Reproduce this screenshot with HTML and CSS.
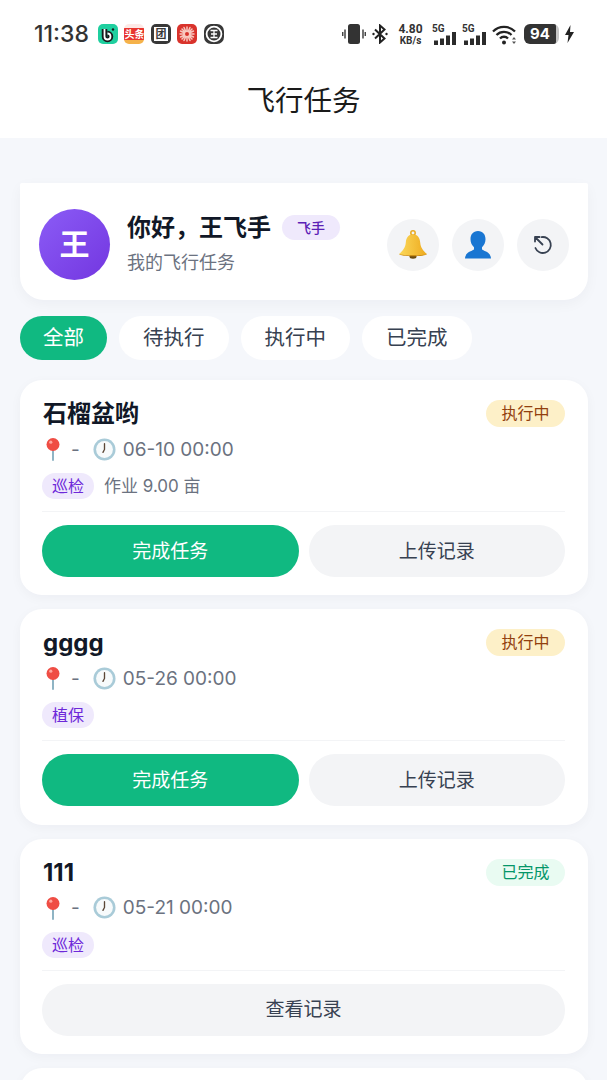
FILE: index.html
```html
<!DOCTYPE html>
<html lang="zh">
<head>
    <meta charset="UTF-8">
    <meta name="viewport" content="width=device-width, initial-scale=1.0">
    <title>飞行任务</title>
    <link rel="stylesheet" href="styles.css">
</head>
<body>
    <svg class="defs" width="0" height="0">
        <symbol id="pin" viewBox="0 0 18 24">
            <path d="M9 11v12" stroke="#8fb4c4" stroke-width="2" stroke-linecap="round"/>
            <circle cx="9" cy="7.5" r="6.5" fill="#ef4d44"/>
            <circle cx="6.800" cy="5.200" r="1.600" fill="#ffa69e"/>
        </symbol>
        <symbol id="clock" viewBox="0 0 24 24">
            <circle cx="12" cy="12" r="11.500" fill="#a9cbd8"/>
            <circle cx="12" cy="12" r="8.800" fill="#f7fafb"/>
            <path d="M12 12V6M12 12l-1.600 3" stroke="#5b4636" stroke-width="1.400" stroke-linecap="round"/>
        </symbol>
    </svg>

    <div class="top-bar">
        <div class="status-bar">
            <span class="time">11:38</span>
            <div class="app-icons">
                <span class="app app-green">
                    <svg width="17" height="17" viewBox="0 0 17 17"><path d="M5.500 3v7.500a3 3 0 1 0 3-3" fill="none" stroke="#17191b" stroke-width="5.500"/><path d="M5.500 3v7.500a3 3 0 1 0 3-3" fill="none" stroke="#fff" stroke-width="1.800"/><circle cx="14" cy="3.500" r="1.200" fill="#17191b"/></svg>
                </span>
                <span class="app app-news">头条</span>
                <span class="app app-dark"><span class="app-frame">团</span></span>
                <span class="app app-red">
                    <svg width="18" height="18" viewBox="0 0 18 18"><g stroke="#f8c9c0" stroke-width="1.500" stroke-linecap="round"><path d="M9 2v14M2 9h14M4 4l10 10M14 4L4 14M6 2.500l6 13M12 2.500l-6 13M2.500 6l13 6M2.500 12l13-6"/></g><circle cx="9" cy="9" r="2" fill="#d9332c"/></svg>
                </span>
                <span class="app app-dark app-round">
                    <svg width="18" height="18" viewBox="0 0 18 18"><circle cx="9" cy="9" r="7.400" fill="none" stroke="#fff" stroke-width="1.800"/><path d="M5.500 5.500h7M6 9h6M5.500 12.500h7M9 5.500v7" stroke="#fff" stroke-width="1.300"/></svg>
                </span>
            </div>
            <div class="sys-icons">
                <svg class="ic-vibrate" width="24" height="20" viewBox="0 0 24 20"><rect x="6" y="0" width="12" height="20" rx="2.500" fill="#333"/><path d="M3 5.500v9M.7 8v4M21 5.500v9M23.300 8v4" stroke="#444" stroke-width="1.500"/></svg>
                <svg class="ic-bt" width="16" height="20" viewBox="0 0 16 20"><path d="M3 5.500l9.500 9L8 18.500V1.500l4.500 4L3 14.500" fill="none" stroke="#222" stroke-width="2"/><circle cx="1.500" cy="10" r="1.200" fill="#222"/><circle cx="14.500" cy="10" r="1.200" fill="#222"/></svg>
                <span class="speed"><b>4.80</b><b class="unit">KB/s</b></span>
                <span class="signal"><b>5G</b><svg width="24" height="13" viewBox="0 0 24 13"><path d="M2 8.500h4V13H2zM8 6.500h4V13H8zM14 3.500h4V13h-4zM20 0h4v13h-4z" fill="#2b2b2b"/></svg></span>
                <span class="signal"><b>5G</b><svg width="24" height="13" viewBox="0 0 24 13"><path d="M2 8.500h4V13H2zM8 6.500h4V13H8zM14 3.500h4V13h-4zM20 0h4v13h-4z" fill="#2b2b2b"/></svg></span>
                <svg width="26" height="21" viewBox="0 0 26 21"><path d="M1 7.500a15.500 15.500 0 0 1 22 0M4.500 11a10.500 10.500 0 0 1 15 0M8 14.500a5.500 5.500 0 0 1 8 0" fill="none" stroke="#222" stroke-width="2.300"/><circle cx="12" cy="18.500" r="2" fill="#222"/><path d="M22 13l2 2.500h-4zM22 20l2-2.500h-4z" fill="#555"/></svg>
                <span class="battery"><span class="battery-level">94</span></span>
                <svg width="9" height="18" viewBox="0 0 9 18"><path d="M5.500 0L0 10h3.500L2.500 18 9 7H5z" fill="#222"/></svg>
            </div>
        </div>
        <h1>飞行任务</h1>
    </div>

    <main class="content">
        <section class="hero">
            <div class="avatar">王</div>
            <div class="hero-text">
                <div class="hero-name">
                    <strong>你好，王飞手</strong>
                    <span class="role">飞手</span>
                </div>
                <p>我的飞行任务</p>
            </div>
            <div class="hero-actions">
                <button class="round-btn" aria-label="通知">
                    <svg width="30" height="30" viewBox="0 0 30 30">
                        <defs><linearGradient id="bell" x1="0" x2="1" y1="0" y2="0"><stop offset="0" stop-color="#fbd85a"/><stop offset="1" stop-color="#eeaa1e"/></linearGradient></defs>
                        <circle cx="15" cy="3" r="2.200" fill="none" stroke="#e8a91f" stroke-width="1.500"/>
                        <ellipse cx="15" cy="26.500" rx="3.500" ry="2.200" fill="#6b4a10"/>
                        <path d="M15 4.500c-4.800 0-6.800 3.300-7.200 8-.4 4.500-2.300 7.800-6.800 11.500 2 2 26 2 28 0-4.500-3.700-6.400-7-6.800-11.500-.4-4.700-2.400-8-7.200-8z" fill="url(#bell)"/>
                        <path d="M1 24c3.500 1.700 24.500 1.700 28 0-1 3-27 3-28 0z" fill="#cf8e12"/>
                    </svg>
                </button>
                <button class="round-btn" aria-label="个人">
                    <svg width="28" height="30" viewBox="0 0 28 30"><path d="M14 1c-5 0-7.500 3.600-7.500 8.300 0 3.300 1.300 6.100 3.500 7.900v2.300C7 21.500 1.500 22 1 28.500h26c-.5-6.500-6-7-9-9v-2.300c2.200-1.800 3.500-4.600 3.500-7.900C21.500 4.600 19 1 14 1z" fill="#1976d2"/></svg>
                </button>
                <button class="round-btn" aria-label="历史">
                    <svg width="22" height="22" viewBox="0 0 22 22" fill="none" stroke="#374151" stroke-width="1.800" stroke-linecap="round" stroke-linejoin="round"><path d="M9.500 3.100A8 8 0 1 1 3.400 14"/><path d="M3 3l7.500 7.500M3 3v4.500M3 3h4.500"/></svg>
                </button>
            </div>
        </section>

        <nav class="tabs">
            <span class="tab tab-on">全部</span>
            <span class="tab">待执行</span>
            <span class="tab">执行中</span>
            <span class="tab">已完成</span>
        </nav>

        <article class="task">
            <div class="task-head">
                <h2>石榴盆哟</h2>
                <span class="status status-run">执行中</span>
            </div>
            <div class="meta">
                <svg class="pin"><use href="#pin"/></svg>
                <span>-</span>
                <svg class="clock"><use href="#clock"/></svg>
                <span>06-10 00:00</span>
            </div>
            <div class="tags">
                <span class="tag">巡检</span>
                <span class="area">作业 9.00 亩</span>
            </div>
            <div class="task-btns">
                <button class="btn btn-main">完成任务</button>
                <button class="btn">上传记录</button>
            </div>
        </article>

        <article class="task">
            <div class="task-head">
                <h2>gggg</h2>
                <span class="status status-run">执行中</span>
            </div>
            <div class="meta">
                <svg class="pin"><use href="#pin"/></svg>
                <span>-</span>
                <svg class="clock"><use href="#clock"/></svg>
                <span>05-26 00:00</span>
            </div>
            <div class="tags">
                <span class="tag">植保</span>
            </div>
            <div class="task-btns">
                <button class="btn btn-main">完成任务</button>
                <button class="btn">上传记录</button>
            </div>
        </article>

        <article class="task">
            <div class="task-head">
                <h2>111</h2>
                <span class="status status-done">已完成</span>
            </div>
            <div class="meta">
                <svg class="pin"><use href="#pin"/></svg>
                <span>-</span>
                <svg class="clock"><use href="#clock"/></svg>
                <span>05-21 00:00</span>
            </div>
            <div class="tags">
                <span class="tag">巡检</span>
            </div>
            <div class="task-btns">
                <button class="btn">查看记录</button>
            </div>
        </article>

        <article class="task"></article>
    </main>
</body>
</html>
```

FILE: styles.css
```css
html, body {
    height: 1080px;
    overflow: hidden;
}
body {
    margin: 0;
    background-color: #f5f7fb;
    color: #111827;
    font-family: 'Inter', 'Noto Sans CJK SC', sans-serif;
}
.defs {
    position: absolute;
}
.top-bar {
    height: 138px;
    background-color: #fff;
}
.status-bar {
    display: flex;
    align-items: center;
    height: 66px;
    padding: 2px 33px 0 34px;
    box-sizing: border-box;
}
.time {
    font-size: 23px;
    font-weight: 500;
    color: #333;
    margin-right: 9px;
}
.app-icons {
    display: flex;
    gap: 6.5px;
}
.app {
    width: 20px;
    height: 20px;
    border-radius: 5px;
    display: flex;
    align-items: center;
    justify-content: center;
    font-size: 11px;
    font-weight: 700;
    line-height: 1;
    overflow: hidden;
}
.app-green {
    background-color: #1fcf9f;
}
.app-news {
    background: linear-gradient(#fde9e6 0, #fde9e6 22%, #e8352f 22%, #e8352f 80%, #f5b24a 80%);
    color: #fff;
    font-size: 10px;
}
.app-dark {
    background-color: #383838;
    color: #383838;
    font-size: 11px;
}
.app-frame {
    width: 14px;
    height: 14px;
    background-color: #fff;
    line-height: 14px;
    text-align: center;
}
.app-round {
    border-radius: 7px;
}
.app-red {
    background-color: #d9332c;
}
.sys-icons {
    display: flex;
    align-items: center;
    gap: 6px;
    margin-left: auto;
}
.ic-bt {
    margin-right: 3px;
}
.speed {
    display: flex;
    flex-direction: column;
    align-items: center;
    min-width: 27px;
    color: #333;
    line-height: 12px;
    font-size: 12px;
    font-family: 'Roboto', sans-serif;
    margin-right: 2px;
}
.speed .unit {
    font-size: 10px;
    line-height: 11px;
}
.signal {
    display: flex;
    flex-direction: column;
    align-items: flex-start;
    font-size: 10px;
    line-height: 10px;
    color: #333;
    font-family: 'Roboto', sans-serif;
}
.signal svg {
    margin-top: -2px;
}
.battery {
    display: flex;
    align-items: center;
    width: 35px;
    height: 20px;
    box-sizing: border-box;
    border-right: 3px solid #c4c4c4;
    border-radius: 6px;
}
.battery-level {
    flex: 1;
    height: 20px;
    background-color: #333;
    border-radius: 6px 2px 2px 6px;
    color: #fff;
    font-size: 15px;
    font-weight: 700;
    line-height: 20px;
    text-align: center;
}
h1 {
    margin: 0;
    font-size: 28.5px;
    font-weight: 400;
    line-height: 70px;
    text-align: center;
    color: #1a1a1a;
}
.content {
    padding: 45px 19px 0 20px;
}
.hero {
    display: flex;
    align-items: center;
    height: 117px;
    padding: 6px 19px 0;
    box-sizing: border-box;
    background-color: #fff;
    border-radius: 2px 2px 24px 24px;
    box-shadow: 0 4px 14px rgba(17, 24, 39, 0.04);
}
.avatar {
    flex: none;
    width: 71px;
    height: 71px;
    border-radius: 50%;
    background: linear-gradient(135deg, #8b5cf6, #7336e0);
    color: #fff;
    font-size: 30px;
    font-weight: 700;
    line-height: 71px;
    text-align: center;
}
.hero-text {
    margin-left: 17px;
    padding-bottom: 4px;
}
.hero-name {
    display: flex;
    align-items: center;
    gap: 11px;
}
.hero-name strong {
    font-size: 24px;
    line-height: 36px;
    font-weight: 700;
}
.role {
    width: 58px;
    height: 25px;
    border-radius: 13px;
    background-color: #efe9fc;
    color: #5b21b6;
    font-size: 14px;
    font-weight: 500;
    line-height: 25px;
    text-align: center;
}
.hero-text p {
    margin: 4px 0 0;
    color: #6b7280;
    font-size: 18px;
    line-height: 26px;
}
.hero-actions {
    display: flex;
    gap: 13px;
    margin-left: auto;
}
.round-btn {
    display: flex;
    align-items: center;
    justify-content: center;
    width: 52px;
    height: 52px;
    padding: 0;
    border: none;
    border-radius: 50%;
    background-color: #f3f4f6;
}
.tabs {
    display: flex;
    gap: 12px;
    margin: 16px 0 20px;
}
.tab {
    height: 44px;
    padding: 0 24px;
    border-radius: 22px;
    background-color: #fff;
    color: #374151;
    font-size: 20.5px;
    line-height: 44px;
}
.tab-on {
    padding: 0 23px;
    background-color: #10b981;
    color: #fff;
}
.task {
    height: 215.4px;
    margin-bottom: 14px;
    padding: 20px 23px 0 22px;
    box-sizing: border-box;
    background-color: #fff;
    border-radius: 22px;
    box-shadow: 0 3px 12px rgba(17, 24, 39, 0.04);
}
.task-head {
    display: flex;
    align-items: flex-start;
    justify-content: space-between;
    height: 27px;
}
.task-head h2 {
    margin: -1px 0 0 1px;
    font-size: 24px;
    line-height: 30px;
    font-weight: 700;
    color: #111827;
}
.status {
    width: 79px;
    height: 27px;
    border-radius: 14px;
    font-size: 16px;
    line-height: 27px;
    text-align: center;
}
.status-run {
    background-color: #fdf0c8;
    color: #92400e;
}
.status-done {
    background-color: #e9fbf2;
    color: #059669;
}
.meta {
    display: flex;
    align-items: center;
    height: 24px;
    margin-top: 10px;
    color: #6b7280;
    font-size: 19px;
}
.meta .pin {
    width: 18px;
    height: 24px;
    margin: 0 9px 0 2px;
}
.meta .clock {
    width: 23px;
    height: 23px;
    margin: 0 7px 0 13px;
}
.tags {
    display: flex;
    align-items: center;
    gap: 10px;
    height: 26px;
    margin-top: 12px;
    padding-bottom: 12px;
    border-bottom: 1px solid #f3f4f6;
}
.tag {
    width: 52px;
    height: 26px;
    border-radius: 13px;
    background-color: #efe9fc;
    color: #6d28d9;
    font-size: 16px;
    line-height: 26px;
    text-align: center;
}
.area {
    padding-bottom: 3px;
    color: #6b7280;
    font-size: 17px;
}
.task-btns {
    display: flex;
    gap: 10px;
    margin-top: 13px;
}
.btn {
    flex: 1;
    height: 52px;
    padding: 0 0 4px;
    border: none;
    border-radius: 26px;
    background-color: #f3f4f6;
    color: #374151;
    font-family: inherit;
    font-size: 19px;
}
.btn-main {
    background-color: #10b981;
    color: #fff;
}
```
